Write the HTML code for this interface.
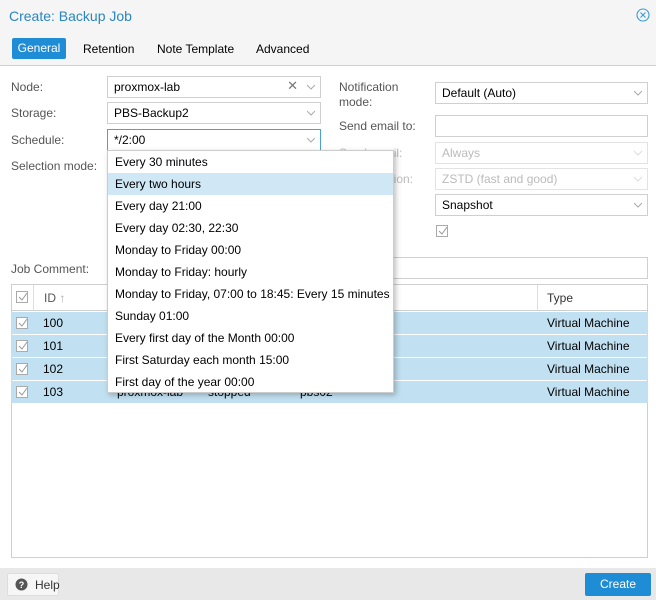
<!DOCTYPE html>
<html><head><style>
*{box-sizing:border-box;margin:0;padding:0}
body{width:656px;height:600px;position:relative;overflow:hidden;background:#fff;font-family:"Liberation Sans",Arial,sans-serif;font-size:12px;color:#000}
.a{position:absolute}
.lbl{position:absolute;color:#555;font-size:12px}
.inp{position:absolute;border:1px solid #cfcfcf;background:#fff;height:22px;padding:3px 6px;font-size:12px;line-height:14px}
.dis{color:#bbb;border-color:#e3e3e3}
.arr{position:absolute;right:5px;top:4px;width:8px;height:8px}
.cb{position:absolute;width:12px;height:12px;border:1px solid #999;background:#fff}
.cb svg{position:absolute;left:0;top:-1px}
.row{position:absolute;left:11px;width:637px;height:22px;background:#c1e0f1}
.row span{position:absolute;top:4px}
.dd div{height:22px;line-height:22px;padding-left:7px;font-size:12px}
</style></head><body>
<div class="a" style="left:0;top:0;width:656px;height:66px;background:#f5f5f5;border-bottom:1px solid #d0d0d0"></div>
<div class="a" style="left:9px;top:8px;font-size:14px;color:#2a86c0">Create: Backup Job</div>
<svg class="a" style="left:636px;top:8px" width="14" height="14" viewBox="0 0 14 14"><circle cx="7" cy="7" r="6" fill="none" stroke="#3a9bd5" stroke-width="1.1"/><path d="M4.5 4.5L9.5 9.5M9.5 4.5L4.5 9.5" stroke="#3a9bd5" stroke-width="1.1"/></svg>
<div class="a" style="left:12px;top:38px;width:54px;height:21px;background:#1f8dd6;border-radius:2px;color:#fff;font-weight:normal;line-height:21px;text-align:center">General</div>
<div class="a" style="left:83px;top:42px">Retention</div>
<div class="a" style="left:157px;top:42px">Note Template</div>
<div class="a" style="left:256px;top:42px">Advanced</div>

<div class="lbl" style="left:11px;top:80px">Node:</div>
<div class="inp" style="left:107px;top:76px;width:214px">proxmox-lab<span class="a" style="right:22px;top:2px;color:#777;font-size:13px">✕</span><svg class="arr" style="top:6px" viewBox="0 0 8 8"><path d="M0 2L4 6L8 2" fill="none" stroke="#aaa"/></svg></div>
<div class="lbl" style="left:11px;top:106px">Storage:</div>
<div class="inp" style="left:107px;top:102px;width:214px">PBS-Backup2<svg class="arr" style="top:6px" viewBox="0 0 8 8"><path d="M0 2L4 6L8 2" fill="none" stroke="#aaa"/></svg></div>
<div class="lbl" style="left:11px;top:133px">Schedule:</div>
<div class="inp" style="left:107px;top:129px;width:214px;border-color:#4ba0d8">*/2:00<svg class="arr" style="top:6px" viewBox="0 0 8 8"><path d="M0 2L4 6L8 2" fill="none" stroke="#aaa"/></svg></div>
<div class="lbl" style="left:11px;top:159px">Selection mode:</div>

<div class="lbl" style="left:339px;top:80px;line-height:15px">Notification<br>mode:</div>
<div class="inp" style="left:435px;top:82px;width:213px">Default (Auto)<svg class="arr" style="top:6px" viewBox="0 0 8 8"><path d="M0 2L4 6L8 2" fill="none" stroke="#aaa"/></svg></div>
<div class="lbl" style="left:339px;top:119px">Send email to:</div>
<div class="inp" style="left:435px;top:115px;width:213px"></div>
<div class="lbl" style="left:339px;top:146px;color:#bbb">Send email:</div>
<div class="inp dis" style="left:435px;top:142px;width:213px">Always<svg class="arr" style="top:6px" viewBox="0 0 8 8"><path d="M0 2L4 6L8 2" fill="none" stroke="#ddd"/></svg></div>
<div class="lbl" style="left:339px;top:172px;color:#bbb">Compression:</div>
<div class="inp dis" style="left:435px;top:168px;width:213px">ZSTD (fast and good)<svg class="arr" style="top:6px" viewBox="0 0 8 8"><path d="M0 2L4 6L8 2" fill="none" stroke="#ddd"/></svg></div>
<div class="inp" style="left:435px;top:194px;width:213px">Snapshot<svg class="arr" style="top:6px" viewBox="0 0 8 8"><path d="M0 2L4 6L8 2" fill="none" stroke="#aaa"/></svg></div>
<div class="cb" style="left:436px;top:225px;border-color:#aaa"><svg width="12" height="12" viewBox="0 0 12 12"><path d="M2 6L5 9L10 2" fill="none" stroke="#999"/></svg></div>

<div class="lbl" style="left:11px;top:262px">Job Comment:</div>
<div class="inp" style="left:107px;top:257px;width:541px"></div>

<div class="a" style="left:11px;top:284px;width:637px;height:274px;border:1px solid #cfcfcf"></div>
<div class="a" style="left:12px;top:285px;width:635px;height:26px;background:#fff;border-bottom:1px solid #cfcfcf"></div>
<div class="a" style="left:33px;top:285px;width:1px;height:26px;background:#ddd"></div>
<div class="a" style="left:537px;top:285px;width:1px;height:26px;background:#ddd"></div>
<div class="cb" style="left:16px;top:291px;border-color:#aaa"><svg width="12" height="12" viewBox="0 0 12 12"><path d="M2 6L5 9L10 2" fill="none" stroke="#999"/></svg></div>
<div class="a" style="left:44px;top:291px;color:#555">ID <span style="color:#aaa">↑</span></div>
<div class="a" style="left:547px;top:291px;color:#333">Type</div>

<div class="row" style="top:312px"><div class="cb" style="left:5px;top:5px;border-color:#aaa"><svg width="12" height="12" viewBox="0 0 12 12"><path d="M2 6L5 9L10 2" fill="none" stroke="#999"/></svg></div><span style="left:32px">100</span><span style="left:536px">Virtual Machine</span></div>
<div class="row" style="top:335px"><div class="cb" style="left:5px;top:5px;border-color:#aaa"><svg width="12" height="12" viewBox="0 0 12 12"><path d="M2 6L5 9L10 2" fill="none" stroke="#999"/></svg></div><span style="left:32px">101</span><span style="left:536px">Virtual Machine</span></div>
<div class="row" style="top:358px"><div class="cb" style="left:5px;top:5px;border-color:#aaa"><svg width="12" height="12" viewBox="0 0 12 12"><path d="M2 6L5 9L10 2" fill="none" stroke="#999"/></svg></div><span style="left:32px">102</span><span style="left:536px">Virtual Machine</span></div>
<div class="row" style="top:381px"><div class="cb" style="left:5px;top:5px;border-color:#aaa"><svg width="12" height="12" viewBox="0 0 12 12"><path d="M2 6L5 9L10 2" fill="none" stroke="#999"/></svg></div><span style="left:32px">103</span><span style="left:106px">proxmox-lab</span><span style="left:197px">stopped</span><span style="left:289px">pbs02</span><span style="left:536px">Virtual Machine</span></div>

<div class="a dd" style="left:107px;top:150px;width:287px;height:243px;background:#fff;border:1px solid #ccc;box-shadow:2px 2px 5px rgba(0,0,0,.25)">
<div>Every 30 minutes</div>
<div style="background:#d0e8f6">Every two hours</div>
<div>Every day 21:00</div>
<div>Every day 02:30, 22:30</div>
<div>Monday to Friday 00:00</div>
<div>Monday to Friday: hourly</div>
<div>Monday to Friday, 07:00 to 18:45: Every 15 minutes</div>
<div>Sunday 01:00</div>
<div>Every first day of the Month 00:00</div>
<div>First Saturday each month 15:00</div>
<div>First day of the year 00:00</div>
</div>

<div class="a" style="left:0;top:568px;width:656px;height:32px;background:#e8e8e8"></div>
<div class="a" style="left:7px;top:573px;width:52px;height:23px;background:#f6f6f6;border:1px solid #ddd;border-radius:2px"></div>
<svg class="a" style="left:15px;top:578px" width="13" height="13" viewBox="0 0 13 13"><circle cx="6.5" cy="6.5" r="6" fill="#555"/><text x="6.5" y="10" font-size="9" font-weight="bold" fill="#fff" text-anchor="middle" font-family="Liberation Sans">?</text></svg>
<div class="a" style="left:35px;top:578px;color:#333">Help</div>
<div class="a" style="left:585px;top:573px;width:66px;height:23px;background:#1f8dd6;border-radius:2px;color:#fff;text-align:center;line-height:23px">Create</div>
</body></html>
